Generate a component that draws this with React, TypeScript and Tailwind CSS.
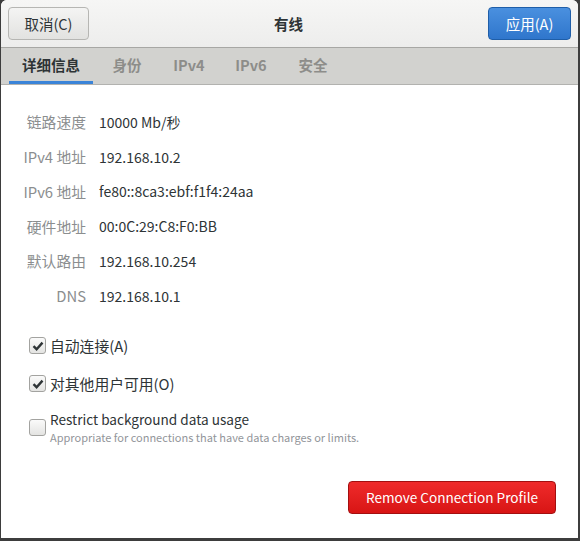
import React from 'react';

const font = { fontFamily: '"Noto Sans CJK SC", "Noto Sans", sans-serif' };

const details: [string, string][] = [
  ['链路速度', '10000 Mb/秒'],
  ['IPv4 地址', '192.168.10.2'],
  ['IPv6 地址', 'fe80::8ca3:ebf:f1f4:24aa'],
  ['硬件地址', '00:0C:29:C8:F0:BB'],
  ['默认路由', '192.168.10.254'],
  ['DNS', '192.168.10.1'],
];

const tabs = ['详细信息', '身份', 'IPv4', 'IPv6', '安全'];

const Check = ({ checked }: { checked: boolean }) => (
  <span className="w-[17px] h-[17px] shrink-0 rounded-[3px] border border-[#a3a3a0] bg-gradient-to-b from-[#fafafa] to-[#e4e4e2] flex items-center justify-center">
    {checked && (
      <svg width="12" height="12" viewBox="0 0 12 12">
        <path d="M1.5 6.2 L4.6 9.2 L10.5 2.6" fill="none" stroke="#2e3436" strokeWidth="2.4" />
      </svg>
    )}
  </span>
);

export default function App() {
  return (
    <div className="w-[580px] h-[541px] bg-[#3d3d3d] pl-px" style={font}>
      <div className="w-[577px] h-[538px] bg-white rounded-t-[6px] overflow-hidden flex flex-col text-[#2e3436]">
        {/* header */}
        <div className="h-[48px] shrink-0 bg-gradient-to-b from-[#f6f6f5] to-[#ededec] border-b border-[#a7a7a4] flex items-center justify-between px-[7px]">
          <button className="w-[81px] h-[33px] rounded-[4px] border border-[#b6b6b3] bg-gradient-to-b from-[#f4f4f3] to-[#e2e2e0] text-[14.5px] text-[#2e3436]">
            取消(C)
          </button>
          <span className="text-[14.5px] font-bold">有线</span>
          <button className="w-[83px] h-[33px] rounded-[4px] border border-[#1f5ea8] bg-gradient-to-b from-[#4a90df] to-[#2f76cc] text-[14.5px] text-white">
            应用(A)
          </button>
        </div>

        {/* tabs */}
        <div className="h-[37px] shrink-0 bg-[#d2d2cf] border-b border-[#b2b2af] flex items-stretch pl-[8px]">
          <div className="w-[84px] flex items-center justify-center text-[14.5px] font-bold border-b-[3px] border-[#3b84d8] text-[#2e3436]">
            {tabs[0]}
          </div>
          <div className="flex ml-[3px]">
            {tabs.slice(1).map((t) => (
              <div
                key={t}
                className="w-[62px] flex items-center justify-center text-[14.5px] font-bold border-b-[3px] border-transparent text-[#8d8d8a]"
              >
                {t}
              </div>
            ))}
          </div>
        </div>

        {/* details */}
        <div className="flex flex-col pt-[20px] pl-[10px]">
          {details.map(([k, v]) => (
            <div key={k} className="h-[34.8px] flex items-center">
              <span className="w-[75px] text-right text-[#8b8e8f] text-[14.8px]">{k}</span>
              <span className="ml-[13px] text-[#2e3436] text-[14px]">{v}</span>
            </div>
          ))}
        </div>

        {/* options */}
        <div className="flex flex-col pl-[28px] mt-[22px]">
          <label className="flex items-center gap-[4px] h-[20px] text-[14.8px]">
            <Check checked />
            <span>自动连接(A)</span>
          </label>
          <label className="flex items-center gap-[4px] h-[20px] mt-[18px] text-[14.8px]">
            <Check checked />
            <span>对其他用户可用(O)</span>
          </label>
          <label className="flex items-center gap-[4px] mt-[16px]">
            <Check checked={false} />
            <span className="flex flex-col">
              <span className="text-[13.6px] leading-[19px]">Restrict background data usage</span>
              <span className="text-[11px] leading-[17px] text-[#92959a]">Appropriate for connections that have data charges or limits.</span>
            </span>
          </label>
        </div>

        <div className="flex justify-end pr-[22px] mt-[35px]">
          <button className="w-[208px] h-[33px] rounded-[4px] border border-[#a30f10] bg-gradient-to-b from-[#ef2a2a] to-[#d81414] text-[13.6px] text-white">
            Remove Connection Profile
          </button>
        </div>
      </div>
    </div>
  );
}
